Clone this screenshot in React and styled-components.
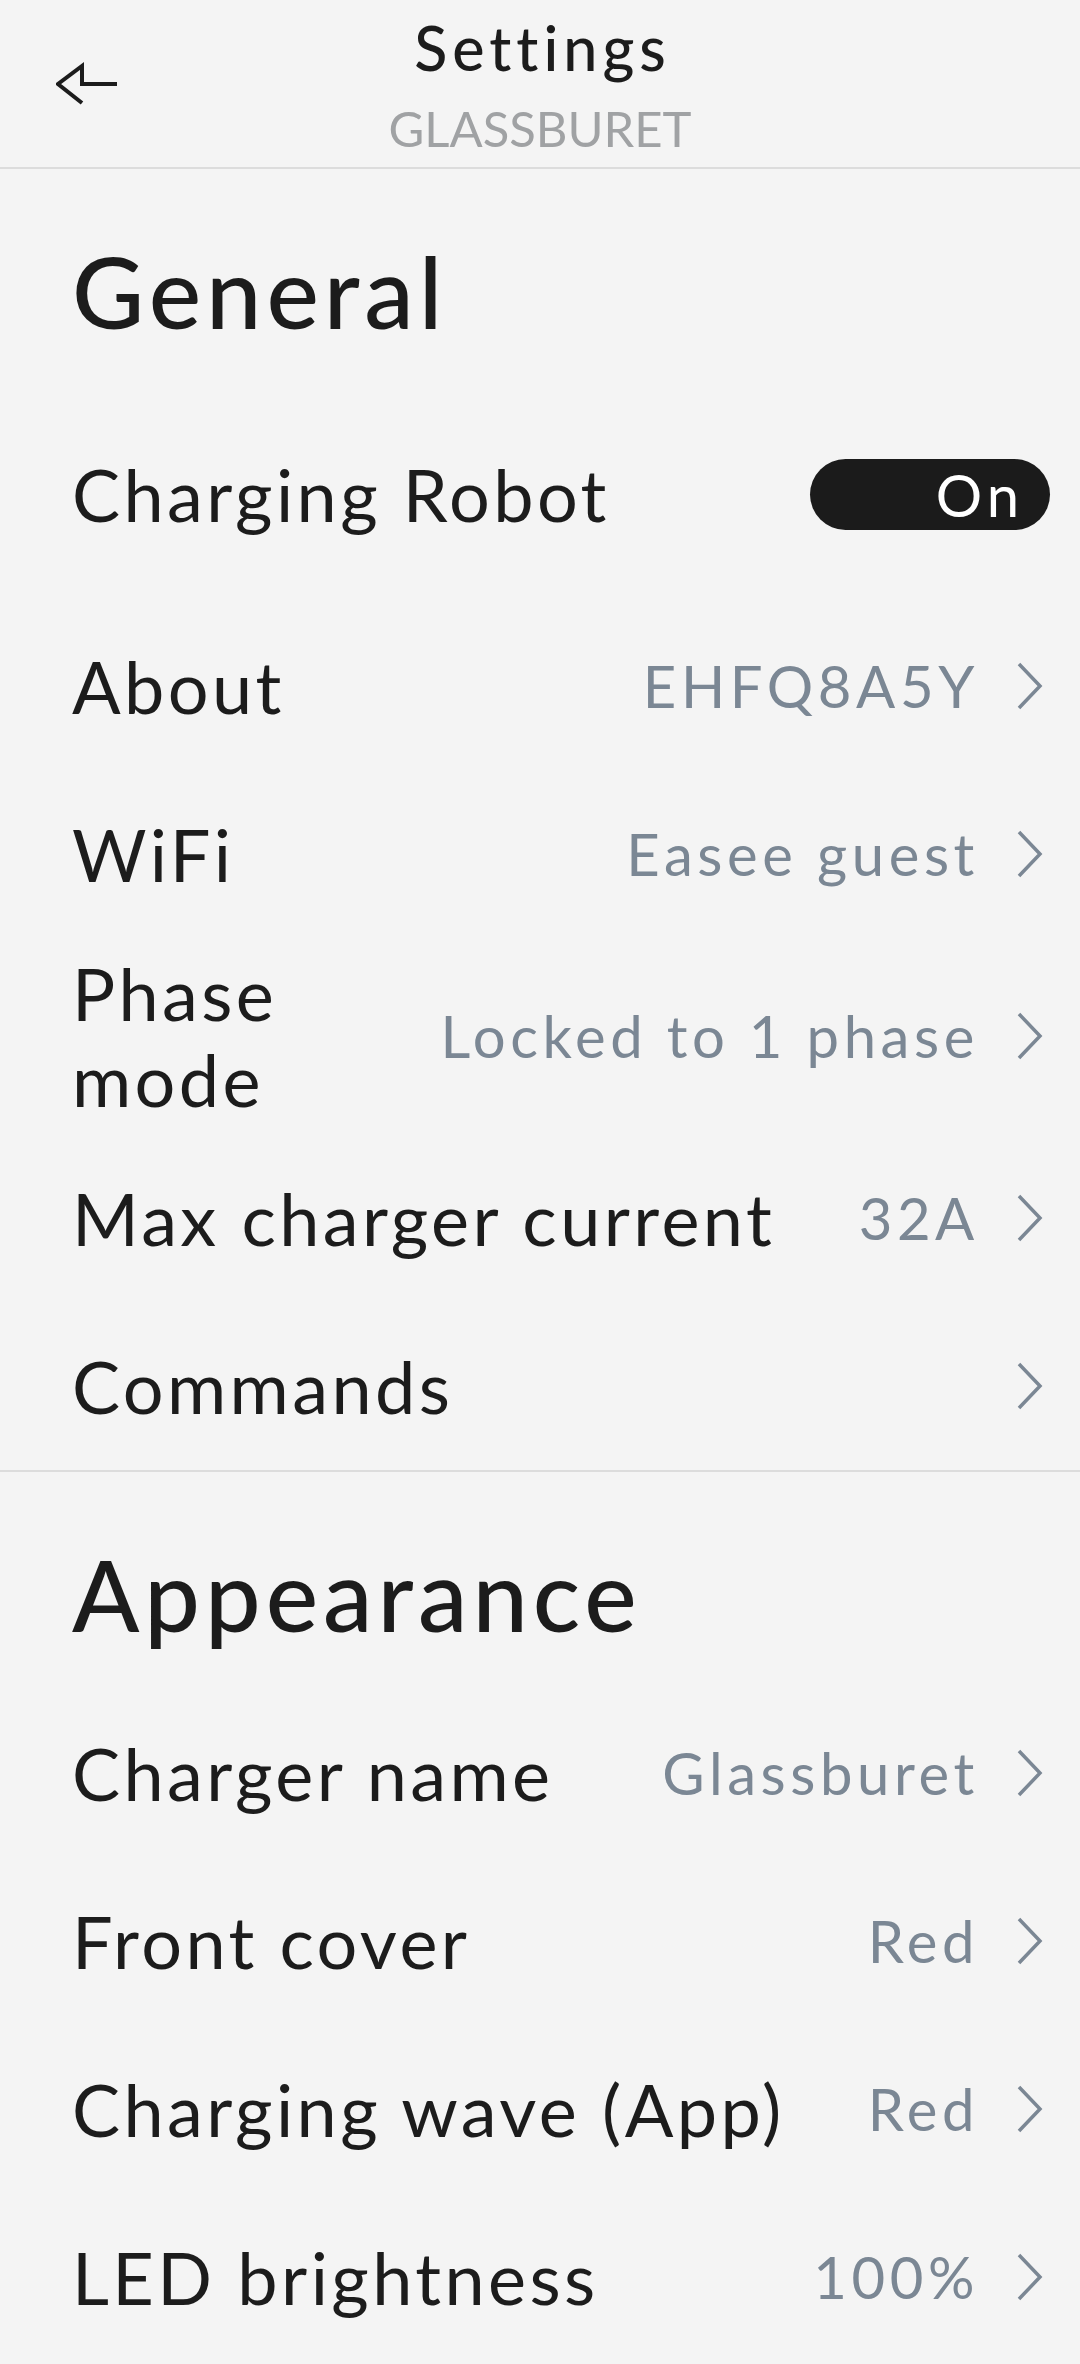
import React from "react";
import styled, { createGlobalStyle } from "styled-components";

const GlobalStyle = createGlobalStyle`
  html, body {
    margin: 0;
    padding: 0;
    background: #f4f4f4;
  }
  body {
    font-family: Lato, "Open Sans", sans-serif;
    color: #1c1c1c;
  }
`;

const general = [
  { title: "About", value: "EHFQ8A5Y" },
  { title: "WiFi", value: "Easee guest" },
  { title: "Phase mode", value: "Locked to 1 phase", tall: true },
  { title: "Max charger current", value: "32A" },
  { title: "Commands" },
];

const appearance = [
  { title: "Charger name", value: "Glassburet" },
  { title: "Front cover", value: "Red" },
  { title: "Charging wave (App)", value: "Red" },
  { title: "LED brightness", value: "100%" },
];

const Page = styled.div`
  width: 1080px;
  min-height: 2364px;
  background: #f4f4f4;
`;

const TopBar = styled.header`
  display: grid;
  grid-template-columns: 1fr auto 1fr;
  align-items: center;
  height: 167px;
  border-bottom: 2px solid #dcdcdc;
`;

const BackButton = styled.button`
  justify-self: start;
  display: flex;
  align-items: center;
  margin-left: 56px;
  padding: 0;
  border: none;
  background: none;
  cursor: pointer;
`;

const TitleBlock = styled.div`
  display: flex;
  flex-direction: column;
  align-items: center;
  align-self: start;
  padding-top: 16px;
`;

const Title = styled.h1`
  margin: 0 -5px 0 0;
  font-size: 61px;
  line-height: 64px;
  font-weight: 500;
  letter-spacing: 5px;
  color: #1c1c1c;
`;

const Subtitle = styled.div`
  margin-top: 18px;
  font-size: 49px;
  line-height: 60px;
  color: #a0a2a4;
`;

const Section = styled.section`
  & + & {
    border-top: 2px solid #dcdcdc;
  }
`;

const Heading = styled.h2`
  margin: 0;
  padding: 62px 72px 35px;
  font-size: 99px;
  line-height: 120px;
  font-weight: 500;
  letter-spacing: 5px;
`;

const Row = styled.div`
  display: flex;
  align-items: center;
  gap: 24px;
  height: ${(p) => (p.$h ? p.$h : 168)}px;
  padding: 0 37px 0 72px;
  box-sizing: border-box;
`;

const Label = styled.div`
  flex: 0 1 auto;
  font-size: 72px;
  line-height: 86px;
  letter-spacing: 3.4px;
`;

const Right = styled.div`
  flex: none;
  margin-left: auto;
  display: flex;
  align-items: center;
  gap: 38px;
`;

const Value = styled.span`
  font-size: 58px;
  line-height: 70px;
  letter-spacing: 4.6px;
  color: #7b8794;
  white-space: nowrap;
`;

const Toggle = styled.div`
  margin-left: auto;
  margin-right: -7px;
  width: 240px;
  height: 71px;
  border-radius: 36px;
  background: #1b1b1b;
  display: flex;
  align-items: center;
  justify-content: flex-end;
  padding-right: 26px;
  box-sizing: border-box;
  color: #fff;
  font-size: 58px;
  line-height: 71px;
  letter-spacing: 5px;
`;

const BackArrow = () => (
  <svg width="64" height="44" viewBox="0 0 64 44" fill="none">
    <path
      d="M26 41 L2 22 L26 4 L26 22 L61 22"
      stroke="#1c1c1c"
      strokeWidth="4"
    />
  </svg>
);

const Chevron = () => (
  <svg width="26" height="48" viewBox="0 0 26 48" fill="none">
    <path d="M2 2 L23 24 L2 46" stroke="#7b8794" strokeWidth="3.5" />
  </svg>
);

const SettingRow = ({ title, value, tall }) => (
  <Row $h={tall ? 196 : 168}>
    <Label>{title}</Label>
    <Right>
      {value && <Value>{value}</Value>}
      <Chevron />
    </Right>
  </Row>
);

export default function App() {
  return (
    <>
      <GlobalStyle />
      <Page>
        <TopBar>
          <BackButton aria-label="Back">
            <BackArrow />
          </BackButton>
          <TitleBlock>
            <Title>Settings</Title>
            <Subtitle>GLASSBURET</Subtitle>
          </TitleBlock>
          <div />
        </TopBar>

        <Section>
          <Heading>General</Heading>
          <Row $h={216}>
            <Label>Charging Robot</Label>
            <Toggle>On</Toggle>
          </Row>
          {general.map((item) => (
            <SettingRow key={item.title} {...item} />
          ))}
        </Section>

        <Section>
          <Heading>Appearance</Heading>
          {appearance.map((item) => (
            <SettingRow key={item.title} {...item} />
          ))}
        </Section>
      </Page>
    </>
  );
}
